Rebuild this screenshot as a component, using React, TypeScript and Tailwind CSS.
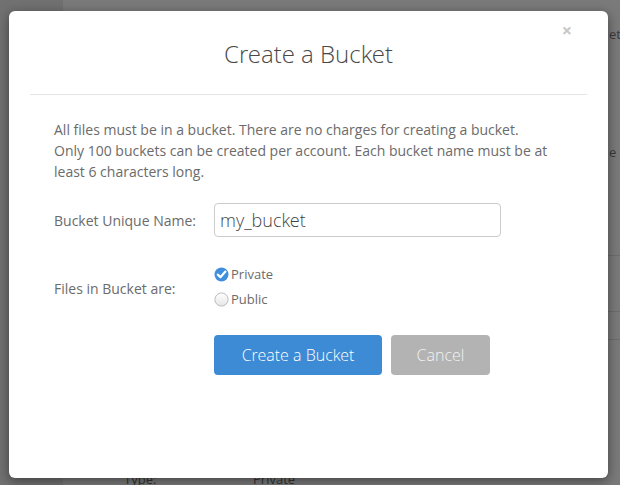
import React from "react"

const font = { fontFamily: '"Open Sans", "Liberation Sans", sans-serif' }
const light = { fontFamily: '"Open Sans Light", "Open Sans", "Liberation Sans", sans-serif', fontWeight: 300 }

function CheckedRadio() {
  return (
    <svg width="15" height="15" viewBox="0 0 15 15" className="shrink-0">
      <circle cx="7.5" cy="7.5" r="7" fill="#3f8fde" />
      <path d="M3.8 7.6 L6.4 10.2 L11.4 4.6" fill="none" stroke="#fff" strokeWidth="2.2" strokeLinecap="round" strokeLinejoin="round" />
    </svg>
  )
}

function EmptyRadio() {
  return (
    <svg width="15" height="15" viewBox="0 0 15 15" className="shrink-0">
      <defs>
        <linearGradient id="rg" x1="0" y1="0" x2="0" y2="1">
          <stop offset="0" stopColor="#ffffff" />
          <stop offset="1" stopColor="#e6e6e6" />
        </linearGradient>
      </defs>
      <circle cx="7.5" cy="7.5" r="6.6" fill="url(#rg)" stroke="#b5b5b5" strokeWidth="0.9" />
    </svg>
  )
}

export default function App() {
  return (
    <div className="relative h-[485px] w-[620px] overflow-hidden bg-[#7a7a7a]" style={font}>
      {/* page behind the overlay */}
      <div className="absolute left-[609px] top-[25px] whitespace-nowrap text-[13px] text-[#3a3a3a]">ete</div>
      <div className="absolute left-[609px] top-[143px] whitespace-nowrap text-[13px] text-[#3a3a3a]">e c</div>
      <div className="absolute left-[608px] right-0 top-[255px] h-px bg-[#6c6c6c]" />
      <div className="absolute left-[608px] right-0 top-[311px] h-px bg-[#6c6c6c]" />
      <div className="absolute left-[608px] right-0 top-[339px] h-px bg-[#6c6c6c]" />
      <div className="absolute bottom-0 left-0 top-0 w-[63px] bg-[#717171]" />
      <div className="absolute left-[124px] top-[470px] text-[13px] text-[#333]">Type:</div>
      <div className="absolute left-[253px] top-[470px] text-[13px] text-[#333]">Private</div>

      {/* modal */}
      <div className="absolute left-[9px] top-[11px] flex h-[467px] w-[599px] flex-col rounded-[6px] bg-white shadow-[0_3px_12px_rgba(0,0,0,0.45)]">
        <div className="relative mx-[21px] flex h-[84px] items-center justify-center border-b border-[#e5e5e5] pt-[2px]">
          <h1 className="text-[24px] text-[#484848]" style={light}>Create a Bucket</h1>
          <span className="absolute right-[15px] top-[10px] text-[18px] font-bold leading-none text-[#c8c8c8]">×</span>
        </div>

        <div className="px-[45px] pt-[24px] text-[14px] leading-[21px] text-[#6b6b6b]">
          <p>
            All files must be in a bucket. There are no charges for creating a bucket.
            <br />
            Only 100 buckets can be created per account. Each bucket name must be at least 6 characters long.
          </p>

          <div className="mt-[21px] flex items-center">
            <label className="w-[160px]">Bucket Unique Name:</label>
            <div className="flex h-[34px] w-[287px] items-center rounded-[4px] border border-[#cccccc] px-[5px] text-[18px] text-[#444]" style={light}>
              my_bucket
            </div>
          </div>

          <div className="mt-[29px] flex items-center">
            <label className="w-[160px] pt-[4px]">Files in Bucket are:</label>
            <div className="flex flex-col gap-[9px] text-[13px] leading-[16px]">
              <div className="flex items-center gap-[2px]">
                <CheckedRadio />
                <span>Private</span>
              </div>
              <div className="flex items-center gap-[2px]">
                <EmptyRadio />
                <span>Public</span>
              </div>
            </div>
          </div>

          <div className="ml-[160px] mt-[28px] flex gap-[9px]">
            <button className="h-[40px] w-[168px] rounded-[4px] bg-[#3d8ad5] text-[16px] text-white" style={light}>
              Create a Bucket
            </button>
            <button className="h-[40px] w-[99px] rounded-[4px] bg-[#b3b3b3] text-[16px] text-[#f2f2f2]" style={light}>
              Cancel
            </button>
          </div>
        </div>
      </div>
    </div>
  )
}
